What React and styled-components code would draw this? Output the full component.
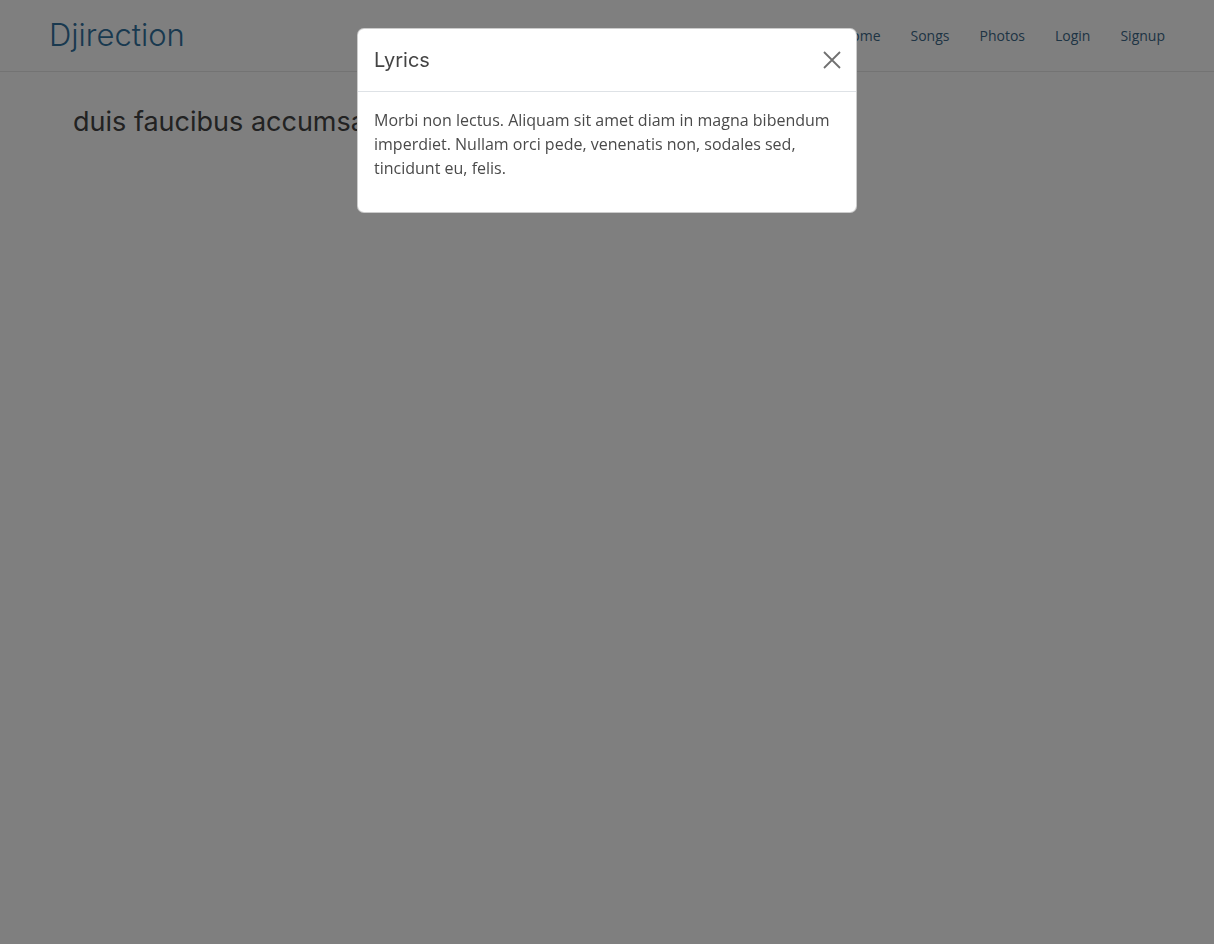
import React from "react";
import styled, { createGlobalStyle } from "styled-components";

const GlobalStyle = createGlobalStyle`
  html, body {
    margin: 0;
    padding: 0;
    background: #fff;
    font-family: "Open Sans", "Liberation Sans", sans-serif;
  }
  * { box-sizing: border-box; }
`;

const links = ["Home", "Songs", "Photos", "Login", "Signup"];

const App = () => {
  return (
    <>
      <GlobalStyle />
      <Navbar>
        <Brand>Djirection</Brand>
        <NavList>
          {links.map((l) => (
            <NavLink key={l}>{l}</NavLink>
          ))}
        </NavList>
      </Navbar>
      <Main>
        <Heading>duis faucibus accumsan odio curabitur convallis</Heading>
      </Main>
      <Backdrop />
      <ModalWrap>
        <Modal>
          <ModalHeader>
            <ModalTitle>Lyrics</ModalTitle>
            <CloseButton aria-label="Close">
              <svg width="20" height="20" viewBox="0 0 20 20">
                <path
                  d="M2 2 L18 18 M18 2 L2 18"
                  stroke="#707070"
                  strokeWidth="1.8"
                  fill="none"
                />
              </svg>
            </CloseButton>
          </ModalHeader>
          <ModalBody>
            <p>
              Morbi non lectus. Aliquam sit amet diam in magna bibendum
              imperdiet. Nullam orci pede, venenatis non, sodales sed,
              tincidunt eu, felis.
            </p>
          </ModalBody>
        </Modal>
      </ModalWrap>
    </>
  );
};

const Navbar = styled.nav`
  display: flex;
  align-items: center;
  justify-content: space-between;
  height: 72px;
  padding: 0 34px 0 49px;
  border-bottom: 1px solid #e6e6e6;
`;
const Brand = styled.div`
  font-family: "Inter", "Lato", sans-serif;
  font-size: 31px;
  font-weight: 300;
  color: #32729f;
  margin-top: -2px;
`;
const NavList = styled.ul`
  display: flex;
  list-style: none;
  margin: 0;
  padding: 0;
`;
const NavLink = styled.li`
  padding: 0 15px;
  font-size: 14px;
  color: #3c6888;
`;
const Main = styled.main`
  padding: 33px 73px;
`;
const Heading = styled.h1`
  margin: 0;
  font-family: "Inter", "Lato", sans-serif;
  font-size: 27px;
  font-weight: 400;
  color: #444;
  line-height: 34px;
`;
const Backdrop = styled.div`
  position: fixed;
  inset: 0;
  background: rgba(0, 0, 0, 0.5);
`;
const ModalWrap = styled.div`
  position: fixed;
  inset: 0;
  display: flex;
  justify-content: center;
  align-items: flex-start;
  padding-top: 28px;
`;
const Modal = styled.div`
  width: 500px;
  background: #fff;
  border: 1px solid rgba(0, 0, 0, 0.2);
  border-radius: 7px;
`;
const ModalHeader = styled.div`
  display: flex;
  align-items: center;
  justify-content: space-between;
  padding: 16px 14px 16px 16px;
  height: 63px;
  border-bottom: 1px solid #dee2e6;
`;
const ModalTitle = styled.h5`
  margin: 0;
  font-family: "Inter", "Lato", sans-serif;
  font-size: 20px;
  font-weight: 400;
  color: #444;
`;
const CloseButton = styled.button`
  display: flex;
  border: 0;
  background: none;
  padding: 0;
  cursor: pointer;
`;
const ModalBody = styled.div`
  padding: 16px 16px 32px;
  p {
    margin: 0;
    font-size: 16px;
    line-height: 24px;
    color: #4a4a4a;
  }
`;

export default App;
